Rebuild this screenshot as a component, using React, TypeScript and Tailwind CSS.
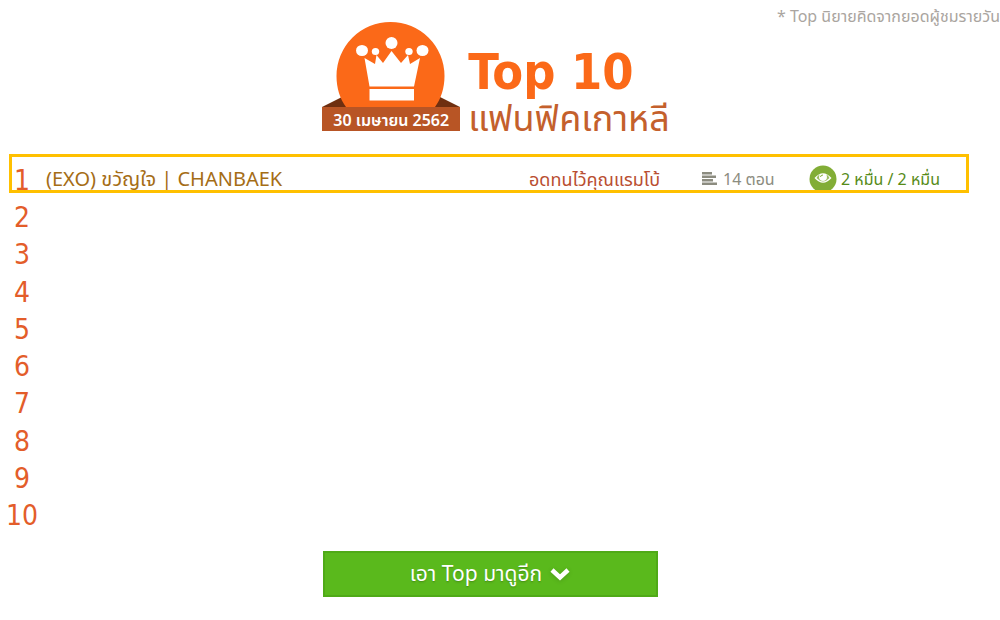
type Story = {
  title: string
  author: string
  chapters: string
  views: string
}

type RankRow = {
  rank: number
  story?: Story
}

const rows: RankRow[] = [
  {
    rank: 1,
    story: {
      title: "(EXO) ขวัญใจ | CHANBAEK",
      author: "อดทนไว้คุณแรมโบ้",
      chapters: "14 ตอน",
      views: "2 หมื่น / 2 หมื่น",
    },
  },
  { rank: 2 },
  { rank: 3 },
  { rank: 4 },
  { rank: 5 },
  { rank: 6 },
  { rank: 7 },
  { rank: 8 },
  { rank: 9 },
  { rank: 10 },
]

/** Crown medal with the ribbon that carries the ranking date. */
function DateBadge() {
  return (
    <div className="relative h-[110px] w-[138px] shrink-0">
      <svg aria-hidden viewBox="0 0 138 110" className="block h-full w-full">
        <path d="M0 85 L20 75 H118 L138 85 Z" fill="#6f2f10" />
        <path
          d="M24 85 C18 77 14.500 66 14.500 54 A54 54 0 0 1 122.500 54 C122.500 66 119 77 113 85 Z"
          fill="#fb6918"
        />
        <g fill="#fff">
          <circle cx="69.500" cy="21" r="6" />
          <ellipse cx="40" cy="28.500" rx="6" ry="5.500" />
          <ellipse cx="100.500" cy="28.500" rx="6" ry="5.500" />
          <ellipse cx="53.500" cy="29.500" rx="3.700" ry="3.500" />
          <ellipse cx="87" cy="29.500" rx="3.700" ry="3.500" />
          <path d="M42.500 36 L53 42 L54.500 33 L61 41 L69.500 29 L79 41 L86 33 L88 42 L98 36 L92 64.500 H47.500 Z" />
          <path d="M47.500 67 H92 V78.500 H47.500 Z" />
        </g>
        <rect y="85" width="138" height="24" fill="#b85525" />
      </svg>
      <time
        dateTime="2019-04-30"
        className="absolute inset-x-0 bottom-0 text-center text-[16px] leading-6 font-semibold whitespace-nowrap text-white"
      >
        30 เมษายน 2562
      </time>
    </div>
  )
}

function ChaptersIcon() {
  return (
    <svg aria-hidden viewBox="0 0 15 13" className="h-[13px] w-[15px] shrink-0" fill="#8c8c80">
      <path d="M0 0 H10 V2.500 H0 Z M0 3.500 H14 V6 H0 Z M0 7 H11 V9.500 H0 Z M0 10.500 H15 V13 H0 Z" />
    </svg>
  )
}

function ViewsIcon() {
  return (
    <svg aria-hidden viewBox="0 0 28 28" className="size-7 shrink-0">
      <circle cx="14" cy="14" r="13.500" fill="#82ad36" />
      <path d="M5.500 13 Q14 3.500 22.500 13 Q14 22.500 5.500 13 Z" fill="#fff" />
      <path
        d="M7.500 13 Q8.500 10.500 10.500 9.500 Q8.500 16 14 16 Q19.500 16 17.500 9.500 Q19.500 10.500 20.500 13 Q14 20 7.500 13 Z"
        fill="#82ad36"
        fillOpacity="0.8"
      />
      <path d="M11.500 12 Q11.500 10 14 10" fill="none" stroke="#82ad36" />
    </svg>
  )
}

function ChevronIcon() {
  return (
    <svg
      aria-hidden
      viewBox="0 0 20 14"
      className="h-[14px] w-5 shrink-0 drop-shadow-sm"
      fill="none"
      stroke="#fff"
      strokeWidth="4.500"
    >
      <path d="M2 3 L10 10.500 L18 3" />
    </svg>
  )
}

export default function App() {
  return (
    <main className="min-h-screen overflow-hidden bg-white font-['Noto_Sans','Noto_Sans_Thai',sans-serif]">
      <p className="h-[22px] pt-1 text-right text-[16px] leading-6 whitespace-nowrap text-[#aaa5a0]">
        * Top นิยายคิดจากยอดผู้ชมรายวัน
      </p>

      <header className="flex items-start justify-center gap-2 pr-2">
        <DateBadge />
        <h1 className="pt-6 whitespace-nowrap">
          <span className="block font-['DejaVu_Sans_Condensed','DejaVu_Sans',sans-serif] text-[50px] leading-[52px] font-bold text-[#fb6918]">
            Top 10
          </span>
          <span className="block text-[36px] leading-10 text-[#c4602c]">แฟนฟิคเกาหลี</span>
        </h1>
      </header>

      <section className="relative mt-[22px]">
        <table className="h-[373px] w-full table-fixed border-collapse">
          <colgroup>
            <col className="w-11" />
            <col />
            <col className="w-[173px]" />
            <col className="w-[107px]" />
            <col className="w-[191px]" />
          </colgroup>
          <tbody>
            {rows.map(({ rank, story }) => (
              <tr key={rank} className="whitespace-nowrap">
                <th
                  scope="row"
                  className="p-0 pt-1 text-center font-['DejaVu_Sans_Condensed','DejaVu_Sans',sans-serif] text-[28px] leading-8 font-normal text-[#e35d2a]"
                >
                  {rank}
                </th>
                <td className="p-0 text-[20px] leading-9 text-[#a56d16]">
                  {story && (
                    <a href="#story" className="pl-0.5">
                      {story.title}
                    </a>
                  )}
                </td>
                <td className="p-0 text-[18px] leading-9 text-[#b94e31]">
                  {story && <a href="#author">{story.author}</a>}
                </td>
                <td className="p-0 text-[16px] leading-9 text-[#8c8c80]">
                  {story && (
                    <span className="flex items-center gap-1.5">
                      <ChaptersIcon />
                      {story.chapters}
                    </span>
                  )}
                </td>
                <td className="p-0 text-[16px] leading-8 text-[#568b18]">
                  {story && (
                    <span className="flex items-center gap-1">
                      <ViewsIcon />
                      {story.views}
                    </span>
                  )}
                </td>
              </tr>
            ))}
          </tbody>
        </table>
        <div
          aria-hidden
          className="pointer-events-none absolute -top-1.5 right-[31px] left-[9px] h-[39px] border-3 border-[#ffc000]"
        />
      </section>

      <div className="mt-[18px] flex justify-center pr-5">
        <button
          type="button"
          className="flex h-[46px] w-[335px] items-center justify-center gap-2 border-2 border-[#4faa17] bg-[#5ab91c] text-[21px] whitespace-nowrap text-white text-shadow-sm"
        >
          เอา Top มาดูอีก
          <ChevronIcon />
        </button>
      </div>
    </main>
  )
}
